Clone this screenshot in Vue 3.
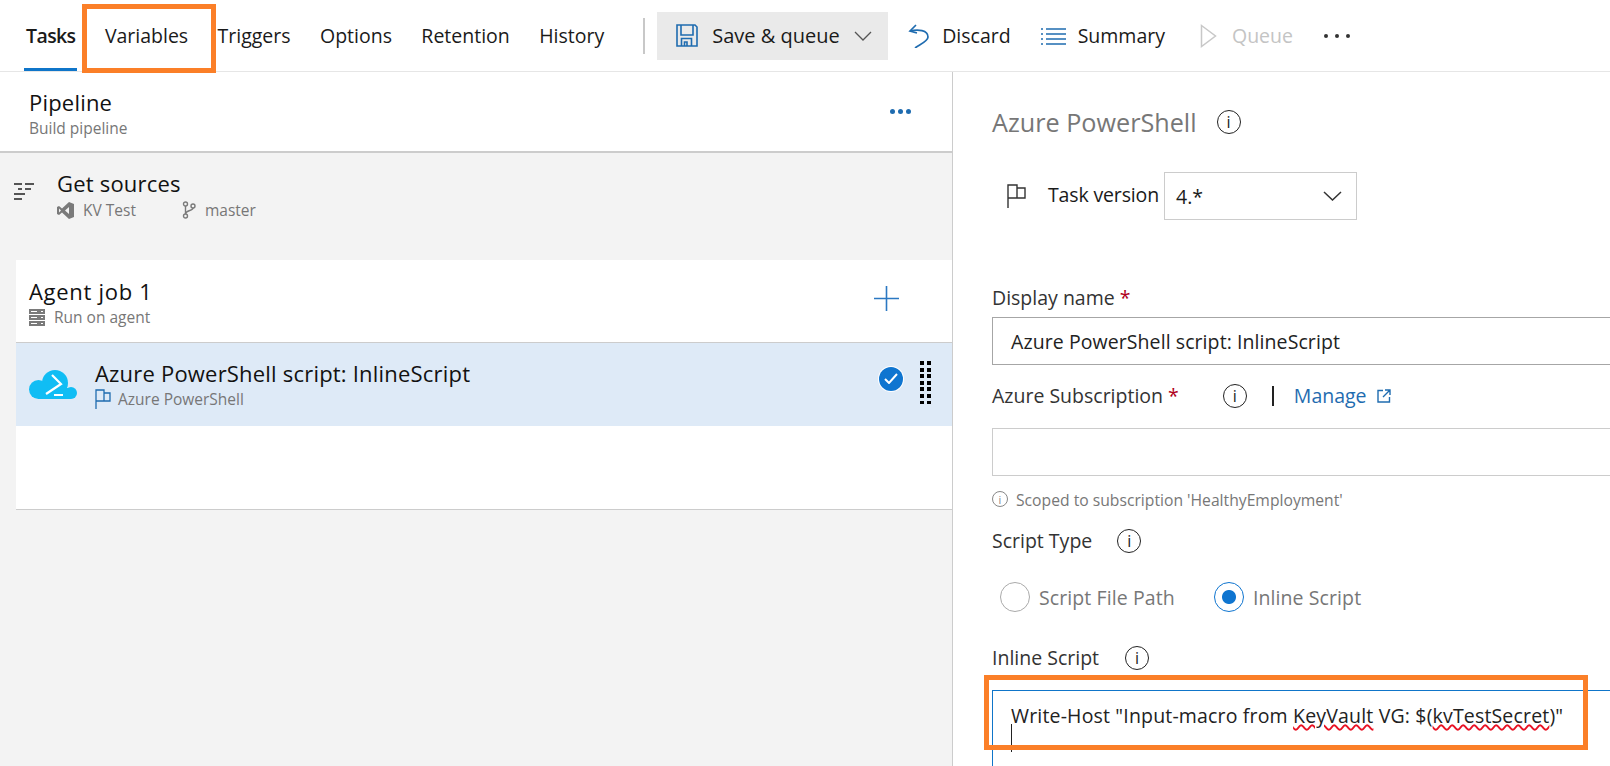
<template>
  <div class="page">
    <header class="toolbar">
      <nav class="tabs">
        <a v-for="tab in tabs" :key="tab" class="tab" :class="{ active: tab === 'Tasks' }">{{ tab }}</a>
      </nav>
      <span class="divider"></span>
      <button class="tool save" type="button">
        <svg width="22" height="23" viewBox="0 0 22 23" fill="none" stroke="#1f6cb0" stroke-width="1.6">
          <path d="M1 1h18l2 2v19H1z" />
          <path d="M5 1v10h12V1M5.500 22v-7.500h10V22" />
          <path d="M8.500 22v-4h2.500v4" />
        </svg>
        <span>Save &amp; queue</span>
        <svg class="chev" width="18" height="10" viewBox="0 0 18 10" fill="none" stroke="#555" stroke-width="1.3"><path d="M1 1l8 8 8-8" /></svg>
      </button>
      <button class="tool discard" type="button">
        <svg width="22" height="24" viewBox="0 0 22 24" fill="none" stroke="#1f6cb0" stroke-width="1.7">
          <path d="M8 1L2 7l7 2" />
          <path d="M2 7c8-2 18-1 18 6 0 4-7 7-13 11" />
        </svg>
        <span>Discard</span>
      </button>
      <button class="tool summary" type="button">
        <svg width="25" height="18" viewBox="0 0 25 18" fill="none" stroke="#1f6cb0" stroke-width="1.700">
          <path d="M5 2h20M5 7h20M5 12h20M5 17h20" />
          <path d="M0 2h2M0 7h2M0 12h2M0 17h2" />
        </svg>
        <span>Summary</span>
      </button>
      <button class="tool queue" type="button">
        <svg width="17" height="24" viewBox="0 0 17 24" fill="none" stroke="#c8c8c8" stroke-width="1.5"><path d="M1.500 1.500L15.500 12 1.500 22.500z" /></svg>
        <span>Queue</span>
      </button>
      <span class="more"><i></i><i></i><i></i></span>
    </header>

    <div class="body">
      <section class="left">
        <div class="pipeline">
          <div>
            <div class="title">Pipeline</div>
            <div class="sub">Build pipeline</div>
          </div>
          <span class="dots"><i></i><i></i><i></i></span>
        </div>

        <div class="sources">
          <svg width="22" height="18" viewBox="0 0 22 18" stroke="#222" stroke-width="1.6">
            <path d="M1 2h8M12 2h9M5 7h4M12 7h6M1 12h11M1 17h8" />
          </svg>
          <div>
            <div class="title">Get sources</div>
            <div class="sub meta">
              <svg width="17" height="17" viewBox="0 0 17 17" fill="#7a7a7a">
                <path d="M12 0l5 2v13l-5 2-7-6.500-3 2.500-2-1V5l2-1 3 2.500zM12 5L8 8.500l4 3.500zM2 6.500v4L4 8.500z" />
              </svg>
              <span>KV Test</span>
              <svg class="branch" width="14" height="18" viewBox="0 0 14 18" fill="none" stroke="#7a7a7a" stroke-width="1.4">
                <circle cx="3.500" cy="3" r="2" /><circle cx="3.500" cy="15" r="2" /><circle cx="11" cy="5" r="2" />
                <path d="M3.500 5v8M11 7c0 3-7 2-7.500 6" />
              </svg>
              <span>master</span>
            </div>
          </div>
        </div>

        <div class="job">
          <div class="job-head">
            <div>
              <div class="title agent">Agent job 1</div>
              <div class="sub meta">
                <svg width="16" height="17" viewBox="0 0 16 17">
                  <path fill="#7a7a7a" d="M0 0h16v5H0zM0 6h16v5H0zM0 12h16v5H0z" />
                  <path fill="#fff" d="M2 2h6v1H2zM2 8h6v1H2zM2 14h6v1H2zM12 2h2v1h-2zM12 8h2v1h-2zM12 14h2v1h-2z" />
                </svg>
                <span>Run on agent</span>
              </div>
            </div>
            <svg class="plus" width="25" height="25" viewBox="0 0 25 25" stroke="#2b78c2" stroke-width="1.6"><path d="M12.500 0v25M0 12.500h25" /></svg>
          </div>
          <div class="task">
            <svg class="cloud" width="48" height="29" viewBox="0 0 48 29">
              <g fill="#10bdf4">
                <circle cx="26" cy="13" r="13" />
                <circle cx="9.500" cy="19.500" r="9.500" />
                <circle cx="42" cy="23" r="6" />
                <path d="M9 18h33v11H9z" />
              </g>
              <path fill="none" stroke="#fff" stroke-width="2.200" d="M23 5l9 9-15 10M25 25h9" />
            </svg>
            <div class="task-text">
              <div class="title task-title">Azure PowerShell script: InlineScript</div>
              <div class="sub meta flagged">
                <svg width="16" height="20" viewBox="0 0 16 20" fill="none" stroke="#1f6cb0" stroke-width="1.300"><path d="M1 20V1h8v11H1M9 4h6v8H9" /></svg>
                <span>Azure PowerShell</span>
              </div>
            </div>
            <span class="check">
              <svg width="14" height="11" viewBox="0 0 14 11" fill="none" stroke="#fff" stroke-width="2"><path d="M1 6l4 4 8-9" /></svg>
            </span>
            <span class="grip"></span>
          </div>
          <div class="job-space"></div>
        </div>
      </section>

      <section class="right">
        <div class="heading">
          <h2>Azure PowerShell</h2>
          <span class="info"></span>
        </div>
        <div class="version">
          <svg width="19" height="24" viewBox="0 0 19 24" fill="none" stroke="#333" stroke-width="1.400"><path d="M1 24V1h9v13H1M10 4h8v10h-8" /></svg>
          <span class="version-label">Task version</span>
          <div class="select">
            <span>4.*</span>
            <svg width="19" height="10" viewBox="0 0 19 10" fill="none" stroke="#333" stroke-width="1.500"><path d="M1 1l8.500 8L18 1" /></svg>
          </div>
        </div>

        <label class="field-label name-label">Display name <em>*</em></label>
        <div class="input dark">Azure PowerShell script: InlineScript</div>

        <div class="field-label sub-label">
          <span>Azure Subscription <em>*</em></span>
          <span class="info"></span>
          <b class="bar"></b>
          <a class="manage">Manage</a>
          <svg width="14" height="14" viewBox="0 0 14 14" fill="none" stroke="#1f6cb0" stroke-width="1.400"><path d="M6 1.500H1v11.500h11.500V8M8 1h5v5M13 1L6 8" /></svg>
        </div>
        <div class="input second"></div>
        <div class="note">
          <span class="info small"></span>
          <span>Scoped to subscription 'HealthyEmployment'</span>
        </div>

        <div class="field-label type-label">
          <span>Script Type</span>
          <span class="info"></span>
        </div>
        <div class="radios">
          <span class="radio"></span>
          <span class="radio-text first">Script File Path</span>
          <span class="radio on"></span>
          <span class="radio-text">Inline Script</span>
        </div>

        <div class="field-label inline-label">
          <span>Inline Script</span>
          <span class="info"></span>
        </div>
        <div class="editor">
          <div>Write-Host "Input-macro from <u>KeyVault</u> VG: $(<u>kvTestSecret</u>)"</div>
          <span class="caret"></span>
        </div>
      </section>
    </div>

    <!-- callouts drawn on top of the screenshot -->
    <span class="callout callout-tab"></span>
    <span class="callout callout-editor"></span>
  </div>
</template>

<script setup>
const tabs = ['Tasks', 'Variables', 'Triggers', 'Options', 'Retention', 'History'];
</script>

<style>
html, body { margin: 0; background: #fff; overflow: hidden; }
</style>

<style scoped>
.page {
  position: relative;
  width: 1610px;
  height: 766px;
  overflow: hidden;
  font-family: "Open Sans", "Noto Sans", sans-serif;
  color: #1a1a1a;
  background: #fff;
}

.toolbar {
  display: flex;
  align-items: center;
  height: 71px;
  border-bottom: 1px solid #e6e6e6;
  box-sizing: content-box;
}
.tabs { display: flex; align-self: stretch; gap: 25.400px; padding-left: 24px; }
.tab {
  display: flex;
  align-items: center;
  padding: 0 2px;
  font-size: 19.500px;
  border-bottom: 3px solid transparent;
  border-top: 3px solid transparent;
}
.tab.active { font-weight: 600; border-bottom-color: #0f75c9; letter-spacing: -0.6px; }
.divider { width: 2px; height: 36px; margin: 0 12px 0 37px; background: #c8c8c8; }
.tool {
  display: flex;
  align-items: center;
  height: 48px;
  padding: 0;
  border: 0;
  background: none;
  color: #1a1a1a;
  font: inherit;
  font-size: 19.500px;
}
.save { width: 231px; padding-left: 19px; gap: 14px; background: #eaeaea; box-sizing: border-box; margin-right: 20px; font-size: 20px; }
.discard { gap: 12px; margin-right: 30px; }
.summary { gap: 12px; margin-right: 35px; }
.queue { gap: 15px; color: #c4c4c4; margin-right: 31px; }
.more { display: flex; gap: 7px; }
.more i { width: 4px; height: 4px; border-radius: 50%; background: #333; }

.body { display: grid; grid-template-columns: 953px 1fr; height: 695px; }
.left { background: #f3f3f3; border-right: 1px solid #ccc; }
.title { font-size: 22px; line-height: 29px; letter-spacing: 0.2px; color: #111; }
.title.agent { letter-spacing: 0.7px; }
.sub { margin-top: 1px; font-size: 15.500px; line-height: 20px; color: #777; }
.meta { display: flex; align-items: center; gap: 9px; }
.meta.flagged { gap: 7px; }

.pipeline {
  display: flex;
  justify-content: space-between;
  height: 81px;
  box-sizing: border-box;
  padding: 16px 41px 0 29px;
  background: #fff;
  border-bottom: 2px solid #ccc;
}
.dots { display: flex; gap: 3px; margin-top: 21px; }
.dots i { width: 5px; height: 5px; border-radius: 50%; background: #1f6cb0; }

.sources { display: flex; gap: 22px; padding: 16px 0 0 13px; height: 107px; box-sizing: border-box; }
.sources > svg { margin-top: 13px; }
.sources .sub { margin-top: 2px; }
.branch { margin-left: 37px; }

.job { margin-left: 16px; background: #fff; border-bottom: 1px solid #ccc; }
.job-head {
  display: flex;
  justify-content: space-between;
  height: 83px;
  box-sizing: border-box;
  padding: 17px 53px 0 13px;
  border-bottom: 1px solid #ccc;
}
.plus { margin-top: 9px; }
.task {
  display: flex;
  align-items: center;
  height: 83px;
  padding-left: 13px;
  background: #deeaf7;
}
.cloud { margin-right: 18px; }
.task-text { flex: 1; padding-bottom: 2px; }
.check {
  display: flex;
  align-items: center;
  justify-content: center;
  width: 24px;
  height: 24px;
  margin: 0 17px 12px 0;
  border-radius: 50%;
  background: #0f75d0;
  box-shadow: 0 0 0 1px #fff;
}
.grip {
  width: 11px;
  height: 43px;
  margin: 0 21px 4px 0;
  background: repeating-linear-gradient(to bottom, #000 0 4px, transparent 4px 6.600px);
  mask: linear-gradient(to right, #000 0 4px, transparent 4px 7px, #000 7px 11px);
}
.job-space { height: 83px; }

.right { padding: 0 0 0 39px; overflow: hidden; }
.heading { display: flex; align-items: center; gap: 20px; padding-top: 32px; height: 36px; }
h2 { margin: 0; font-size: 25.200px; font-weight: 400; color: #777; }
.info {
  display: inline-flex;
  align-items: center;
  justify-content: center;
  width: 24px;
  height: 24px;
  box-sizing: border-box;
  border: 1.500px solid #222;
  border-radius: 50%;
}
.info::before {
  content: "i";
  font-size: 16px;
  line-height: 1;
  color: #222;
}
.info.small { width: 16px; height: 16px; margin-bottom: 3px; border: 1px solid #888; }
.info.small::before { font-size: 11px; color: #888; }

.version { display: flex; align-items: center; margin: 32px 0 0 15px; height: 48px; }
.version-label { width: 117px; margin-left: 22px; font-size: 19.500px; letter-spacing: -0.15px; padding-bottom: 3px; box-sizing: border-box; margin-right: -1px; }
.select {
  display: flex;
  align-items: center;
  justify-content: space-between;
  width: 193px;
  height: 48px;
  box-sizing: border-box;
  padding: 0 14px 0 11px;
  border: 1px solid #ccc;
  font-size: 19.500px;
}
.field-label {
  display: flex;
  align-items: center;
  font-size: 19.500px;
  line-height: 28px;
  color: #333;
}
.field-label em { color: #b00020; font-style: normal; }
.name-label { margin-top: 64px; gap: 5px; }
.input {
  height: 48px;
  box-sizing: border-box;
  margin: 5px -4px 0 0;
  padding: 0 18px;
  line-height: 48px;
  border: 1px solid #ccc;
  font-size: 19.500px;
  letter-spacing: 0.08px;
  color: #222;
}
.input.dark { border-color: #a6a6a6; }
.input.second { margin-top: 18px; }
.sub-label { margin-top: 17px; }
.sub-label .info { margin-left: 44px; }
.bar { width: 2px; height: 20px; background: #222; margin: 0 20px 0 25px; }
.manage { color: #1f6cb0; margin-right: 10px; }
.note { display: flex; align-items: center; gap: 8px; margin-top: 14px; font-size: 15.700px; line-height: 21px; color: #777; }
.type-label { margin-top: 16px; }
.type-label .info { margin-left: 25px; }
.radios { display: flex; align-items: center; margin: 27px 0 0 8px; font-size: 19.500px; letter-spacing: 0.1px; color: #777; }
.radio { width: 30px; height: 30px; box-sizing: border-box; border: 1px solid #aaa; border-radius: 50%; background: #fff; }
.radio.on { border-color: #0f75d0; background: radial-gradient(circle, #0f75d0 0 6.500px, #fff 7.500px); }
.radio-text { margin-left: 9px; }
.radio-text.first { margin-right: 39px; }
.inline-label { margin-top: 32px; }
.inline-label .info { margin-left: 26px; }
.editor {
  margin: 18px 0 0 0;
  height: 120px;
  padding: 11px 0 0 18px;
  border: 1px solid #0f75c9;
  border-width: 1px 0 0 1px;
  font-size: 19.500px;
  letter-spacing: 0.17px;
  line-height: 27px;
  color: #222;
}
.editor u { text-decoration: underline wavy #e81123 1.500px; }
.caret { display: block; width: 1px; height: 28px; margin-top: -5px; background: #222; }

.callout { position: absolute; border: 5px solid #fb7f28; box-sizing: border-box; }
.callout-tab { left: 82px; top: 4px; width: 134px; height: 69px; }
.callout-editor { left: 984px; top: 675px; width: 604px; height: 75px; }
</style>
